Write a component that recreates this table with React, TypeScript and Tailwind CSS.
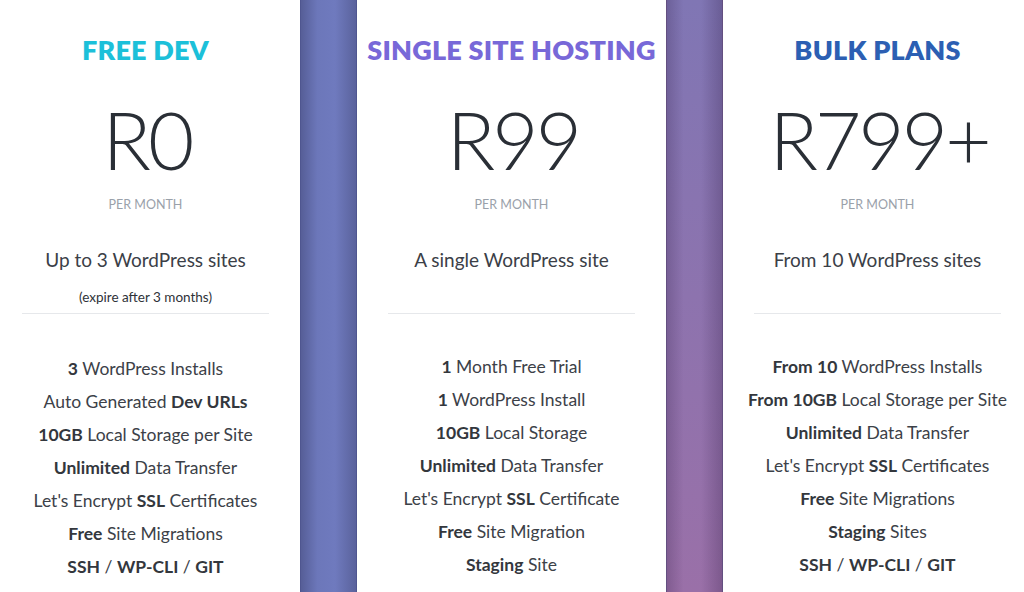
import type { ReactNode } from "react";

type Plan = {
  title: string;
  titleColor: string;
  price: string;
  subtitle: string;
  note?: string;
  features: ReactNode[];
};

const plans: Plan[] = [
  {
    title: "FREE DEV",
    titleColor: "text-[#1cc0d9]",
    price: "R0",
    subtitle: "Up to 3 WordPress sites",
    note: "(expire after 3 months)",
    features: [
      <><b>3</b> WordPress Installs</>,
      <>Auto Generated <b>Dev URLs</b></>,
      <><b>10GB</b> Local Storage per Site</>,
      <><b>Unlimited</b> Data Transfer</>,
      <>Let's Encrypt <b>SSL</b> Certificates</>,
      <><b>Free</b> Site Migrations</>,
      <><b>SSH</b> / <b>WP-CLI</b> / <b>GIT</b></>,
    ],
  },
  {
    title: "SINGLE SITE HOSTING",
    titleColor: "text-[#7868d8]",
    price: "R99",
    subtitle: "A single WordPress site",
    features: [
      <><b>1</b> Month Free Trial</>,
      <><b>1</b> WordPress Install</>,
      <><b>10GB</b> Local Storage</>,
      <><b>Unlimited</b> Data Transfer</>,
      <>Let's Encrypt <b>SSL</b> Certificate</>,
      <><b>Free</b> Site Migration</>,
      <><b>Staging</b> Site</>,
    ],
  },
  {
    title: "BULK PLANS",
    titleColor: "text-[#2c5fb3]",
    price: "R799+",
    subtitle: "From 10 WordPress sites",
    features: [
      <><b>From 10</b> WordPress Installs</>,
      <><b>From 10GB</b> Local Storage per Site</>,
      <><b>Unlimited</b> Data Transfer</>,
      <>Let's Encrypt <b>SSL</b> Certificates</>,
      <><b>Free</b> Site Migrations</>,
      <><b>Staging</b> Sites</>,
      <><b>SSH</b> / <b>WP-CLI</b> / <b>GIT</b></>,
    ],
  },
];

function PlanColumn({ plan }: { plan: Plan }) {
  return (
    <div className="flex w-[309px] shrink-0 flex-col items-center bg-white pt-[34px] text-center">
      <h2 className={`text-[27px] leading-[32px] font-extrabold tracking-[0.2px] ${plan.titleColor}`}>
        {plan.title}
      </h2>
      <div className="mt-[33px] pl-[3px] text-[80px] leading-[80px] font-light tracking-[-3px] text-[#2a2f36]">
        {plan.price}
      </div>
      <div className="mt-[18px] text-[12.5px] leading-[16px] text-[#9aa1aa]">PER MONTH</div>
      <div className="mt-[35px] h-[65px] w-full">
        <div className="text-[19px] leading-[24px] text-[#3b4047]">{plan.subtitle}</div>
        {plan.note && (
          <div className="mt-[17px] text-[13.5px] leading-[16px] text-[#2e3238]">{plan.note}</div>
        )}
      </div>
      <div className="h-px w-[247px] bg-[#e6e8eb]" />
      <ul className={`${plan.note ? "mt-[45px]" : "mt-[43px]"} flex flex-col gap-[13px] text-[17.5px] leading-[20px] text-[#3c4148] [&_b]:font-bold [&_b]:text-[#33373d]`}>
        {plan.features.map((f, i) => (
          <li key={i}>{f}</li>
        ))}
      </ul>
    </div>
  );
}

function Strip({ kind }: { kind: "blue" | "purple" }) {
  return kind === "blue" ? (
    <div className="w-[57px] shrink-0 border-x border-[#4f5690] bg-[linear-gradient(to_right,#565e97,#6c77ba_30%,#6f7abe_62%,#5a629c)]" />
  ) : (
    <div className="w-[57px] shrink-0 border-x border-[#634f80] bg-[linear-gradient(to_right,rgba(40,20,60,0.22),rgba(0,0,0,0)_30%,rgba(0,0,0,0)_62%,rgba(40,20,60,0.25)),linear-gradient(to_bottom,#8076b4,#9a70a8)]" />
  );
}

export default function App() {
  return (
    <div className="h-[592px] w-[1024px] overflow-hidden bg-white font-['Lato','Open_Sans',sans-serif]">
      <div className="-ml-[9px] flex h-full w-[1041px]">
        <PlanColumn plan={plans[0]} />
        <Strip kind="blue" />
        <PlanColumn plan={plans[1]} />
        <Strip kind="purple" />
        <PlanColumn plan={plans[2]} />
      </div>
    </div>
  );
}
